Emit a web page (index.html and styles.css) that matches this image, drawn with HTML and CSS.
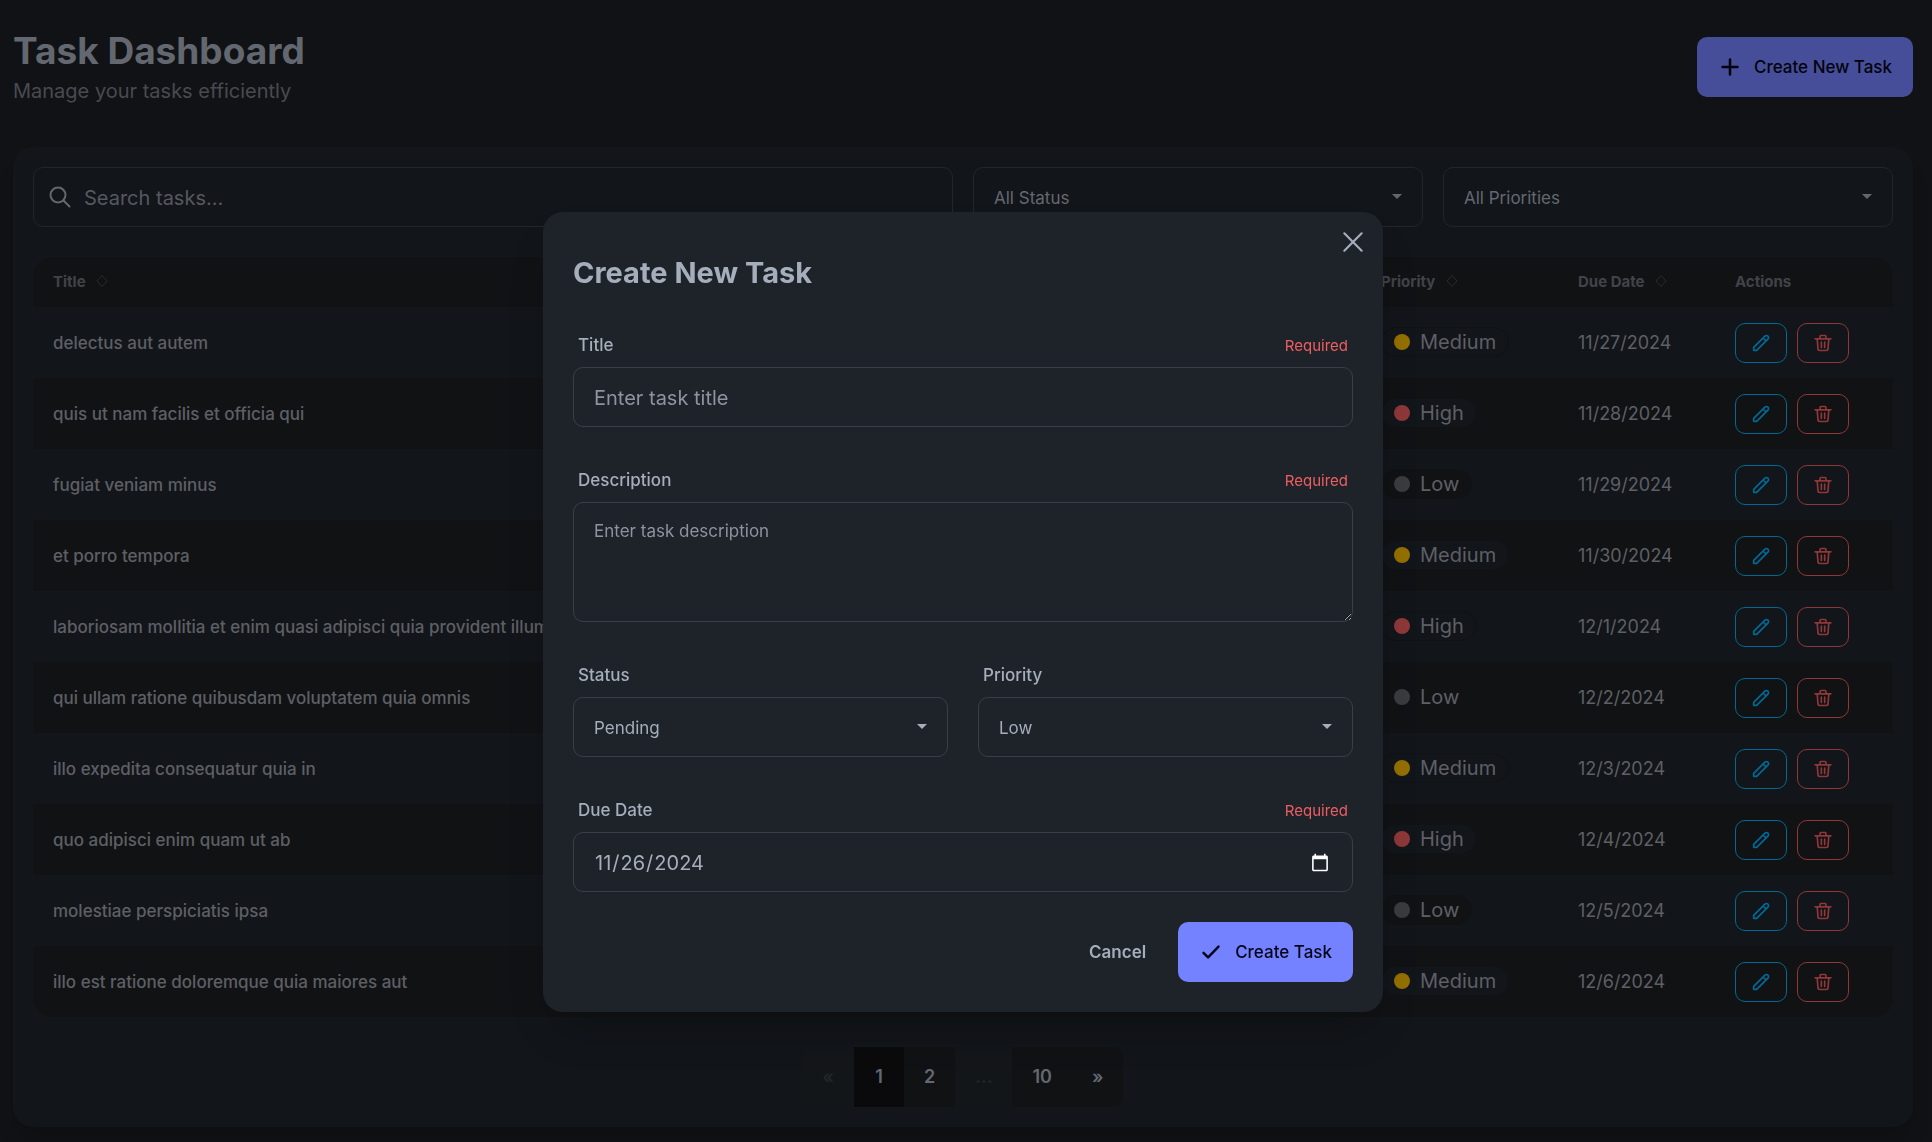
FILE: index.html
```html
<!DOCTYPE html>
<html lang="en">
<head>
<meta charset="utf-8">
<meta name="viewport" content="width=device-width, initial-scale=1">
<title>Task Dashboard</title>
<link rel="stylesheet" href="styles.css">
</head>
<body>
<svg class="sprite" aria-hidden="true">
  <symbol id="i-pencil" viewBox="0 0 24 24"><path d="M14.500 6l3.500 3.500M16.700 3.700a2.500 2.500 0 0 1 3.600 3.600L6.800 20.800H3.200v-3.600L16.700 3.700z"/></symbol>
  <symbol id="i-trash" viewBox="0 0 24 24"><path d="M2.500 7h19M5 7l1 12a2 2 0 0 0 2 2h8a2 2 0 0 0 2-2l1-12M8.500 7V4a1 1 0 0 1 1-1h5a1 1 0 0 1 1 1v3M10 11v6.500M14 11v6.500"/></symbol>
  <symbol id="i-plus" viewBox="0 0 24 24"><path d="M12 3v18M3 12h18"/></symbol>
  <symbol id="i-check" viewBox="0 0 24 24"><path d="M3 13l5.500 5.500L21 5.500"/></symbol>
  <symbol id="i-x" viewBox="0 0 24 24"><path d="M4 4l16 16M20 4L4 20"/></symbol>
  <symbol id="i-search" viewBox="0 0 24 24"><circle cx="10" cy="10" r="7.500"/><path d="M15.500 15.500l6 6"/></symbol>
  <symbol id="i-sort" viewBox="0 0 12 14"><path d="M6 1.500L11 7L6 12.500L1 7z"/></symbol>
  <symbol id="i-caret" viewBox="0 0 10 6"><path d="M0 0h10L5 5z"/></symbol>
</svg>

<div class="page">
  <header class="page-head">
    <div>
      <h1>Task Dashboard</h1>
      <p>Manage your tasks efficiently</p>
    </div>
    <button class="btn btn-primary" type="button"><svg class="icon"><use href="#i-plus"/></svg>Create New Task</button>
  </header>

  <main class="card">
    <div class="filters">
      <label class="field search">
        <svg class="icon"><use href="#i-search"/></svg>
        <input type="text" placeholder="Search tasks..." aria-label="Search tasks">
      </label>
      <div class="select"><select aria-label="Status filter"><option>All Status</option></select><svg class="caret"><use href="#i-caret"/></svg></div>
      <div class="select"><select aria-label="Priority filter"><option>All Priorities</option></select><svg class="caret"><use href="#i-caret"/></svg></div>
    </div>

    <table class="tasks">
      <colgroup><col><col class="c-priority"><col class="c-due"><col class="c-actions"></colgroup>
      <thead>
        <tr>
          <th>Title <svg class="sort"><use href="#i-sort"/></svg></th>
          <th>Priority <svg class="sort"><use href="#i-sort"/></svg></th>
          <th>Due Date <svg class="sort"><use href="#i-sort"/></svg></th>
          <th>Actions</th>
        </tr>
      </thead>
      <tbody id="rows"></tbody>
    </table>

    <nav class="pager" aria-label="Pages">
      <button type="button" disabled>«</button>
      <button type="button" class="current">1</button>
      <button type="button">2</button>
      <button type="button" disabled>...</button>
      <button type="button">10</button>
      <button type="button">»</button>
    </nav>
  </main>
</div>

<div class="backdrop">
  <form class="modal" role="dialog" aria-labelledby="modal-title">
    <button class="close" type="button" aria-label="Close"><svg class="icon"><use href="#i-x"/></svg></button>
    <h2 id="modal-title">Create New Task</h2>
    <div class="control">
      <div class="label"><label for="f-title">Title</label><span class="required">Required</span></div>
      <input class="field" id="f-title" type="text" placeholder="Enter task title">
    </div>
    <div class="control">
      <div class="label"><label for="f-desc">Description</label><span class="required">Required</span></div>
      <textarea class="field" id="f-desc" placeholder="Enter task description"></textarea>
    </div>
    <div class="pair">
      <div class="control">
        <div class="label"><label for="f-status">Status</label></div>
        <div class="select"><select id="f-status"><option>Pending</option></select><svg class="caret"><use href="#i-caret"/></svg></div>
      </div>
      <div class="control">
        <div class="label"><label for="f-priority">Priority</label></div>
        <div class="select"><select id="f-priority"><option>Low</option></select><svg class="caret"><use href="#i-caret"/></svg></div>
      </div>
    </div>
    <div class="control">
      <div class="label"><label for="f-due">Due Date</label><span class="required">Required</span></div>
      <input class="field" id="f-due" type="date" value="2024-11-26">
    </div>
    <div class="modal-actions">
      <button class="btn btn-ghost" type="button">Cancel</button>
      <button class="btn btn-primary" type="submit"><svg class="icon"><use href="#i-check"/></svg>Create Task</button>
    </div>
  </form>
</div>
<script src="tasks.js"></script>
</body>
</html>
```
FILE: styles.css
```css
*, *::before, *::after { box-sizing: border-box; }

:root {
  --base-100: #1e232a;
  --base-200: #1c1e22;
  --content: #a6adbb;
  --primary: #7582ff;
  --info: #00b0f8;
  --warning: #f8ba00;
  --error: #ee5d60;
  --line: #393f48;
  color-scheme: dark;
}

body {
  margin: 0;
  background: #1c1e23;
  color: var(--content);
  font: 400 20px/30px Inter, "Liberation Sans", sans-serif;
}

button, input, select, textarea { font: inherit; color: inherit; }
h1, h2, p { margin: 0; }

.sprite { position: absolute; width: 0; height: 0; }
svg { fill: none; stroke: currentColor; flex: none; }
.icon { width: 20px; height: 20px; stroke-width: 2; stroke-linecap: round; stroke-linejoin: round; }

.page { padding: 27px 19px 15px 13px; }

.page-head {
  display: flex;
  justify-content: space-between;
  align-items: center;
  margin-bottom: 40px;
}
.page-head h1 { font-size: 37px; line-height: 48px; font-weight: 700; }
.page-head p { line-height: 32px; color: #797c85; }

.btn {
  display: flex;
  align-items: center;
  gap: 14px;
  height: 60px;
  padding: 0 20px 0 22px;
  border: 1px solid transparent;
  border-radius: 10px;
  font-size: 17px;
  font-weight: 500;
}
.btn .icon { stroke-width: 3; }
.btn-primary { background: var(--primary); color: #050617; }
.btn-ghost { background: none; font-weight: 600; padding: 0 31px; }

.card {
  padding: 20px;
  border-radius: 20px;
  background: var(--base-100);
  box-shadow: 0 20px 25px -5px rgba(0, 0, 0, .1), 0 8px 10px -6px rgba(0, 0, 0, .1);
}

.filters {
  display: grid;
  grid-template-columns: repeat(4, 1fr);
  gap: 20px;
  margin-bottom: 30px;
}

.field, .select select {
  display: block;
  width: 100%;
  height: 60px;
  padding: 2px 20px 0;
  border: 1px solid var(--line);
  border-radius: 10px;
  background: none;
  outline: none;
}
.field::placeholder, .search input::placeholder { color: #8d939f; opacity: 1; }

.search { grid-column: span 2; display: flex; align-items: center; gap: 12px; padding: 0 14px; }
.search .icon { width: 24px; height: 24px; }
.search input { flex: 1; border: 0; background: none; outline: none; padding: 2px 0 0; }

.select { display: grid; align-items: center; }
.select select, .caret { grid-area: 1 / 1; }
.select select { appearance: none; font-size: 17px; }
.caret { justify-self: end; width: 10px; height: 6px; margin-right: 21px; fill: currentColor; stroke: none; pointer-events: none; }

.tasks {
  width: 100%;
  table-layout: fixed;
  border-collapse: separate;
  border-spacing: 0;
  border-radius: 20px;
  overflow: hidden;
  font-size: 18px;
  text-align: left;
}
.c-priority { width: 197px; }
.c-due { width: 157px; }
.c-actions { width: 178px; }
.tasks th { height: 50px; padding: 0 20px; font-size: 15px; line-height: 20px; color: #6c7078; background: var(--base-200); }
.tasks td { height: 71px; padding: 0 20px; white-space: nowrap; color: #9b9fa8; }
.tasks td:first-child { font-size: 17px; font-weight: 500; }
.tasks tbody tr:nth-child(even) { background: var(--base-200); }
.sort { width: 12px; height: 14px; margin-left: 7px; vertical-align: -1px; opacity: .5; }

.badge {
  display: inline-flex;
  align-items: center;
  gap: 10px;
  height: 30px;
  padding: 0 12px;
  border: 1px solid var(--base-200);
  border-radius: 15px;
  background: var(--base-100);
  font-size: 20px;
}
.badge i { width: 16px; height: 16px; border-radius: 50%; background: #62646a; }
.badge.medium i { background: var(--warning); }
.badge.high i { background: var(--error); }
.badge.low { background: var(--base-200); }

.row-actions { display: flex; gap: 10px; }
.row-actions button {
  display: flex;
  align-items: center;
  justify-content: center;
  width: 52px;
  height: 40px;
  padding: 0;
  border: 1px solid currentColor;
  border-radius: 10px;
  background: none;
}
.row-actions .edit { color: var(--info); }
.row-actions .delete { color: var(--error); }

.pager { display: flex; justify-content: center; margin-top: 30px; }
.pager button {
  height: 60px;
  padding: 0 20px;
  border: 0;
  background: var(--base-200);
  font-size: 18px;
  font-weight: 600;
  min-width: 50px;
}
.pager button:first-child { border-radius: 10px 0 0 10px; }
.pager button:last-child { border-radius: 0 10px 10px 0; }
.pager button:disabled { background: #20252b; color: #3a4048; }
.pager .current { background: #111214; }

.backdrop {
  position: fixed;
  inset: 0;
  display: grid;
  align-items: center;
  justify-items: center;
  padding: 82px 6px 0 0;
  background: rgba(0, 0, 0, .4);
}

.modal {
  position: relative;
  display: flex;
  flex-direction: column;
  gap: 30px;
  width: 840px;
  max-width: 92%;
  padding: 40px 30px 30px;
  border-radius: 20px;
  background: var(--base-100);
  box-shadow: 0 25px 50px -12px rgba(0, 0, 0, .25);
}
.modal h2 { padding-top: 2px; font-size: 29px; line-height: 38px; font-weight: 700; }
.close {
  position: absolute;
  top: 10px;
  right: 10px;
  display: flex;
  align-items: center;
  justify-content: center;
  width: 40px;
  height: 40px;
  padding: 0;
  border: 0;
  background: none;
}
.close .icon { width: 26px; height: 26px; stroke-width: 2; }

.label {
  display: flex;
  justify-content: space-between;
  padding: 11px 5px 9px;
  font-size: 17px;
  line-height: 25px;
  font-weight: 500;
}
.required { font-size: 15px; font-weight: 400; color: var(--error); }
textarea.field { height: 120px; padding: 10px 20px; font-size: 17px; line-height: 36px; resize: vertical; }
.pair { display: grid; grid-template-columns: 1fr 1fr; gap: 30px; }
.modal-actions { display: flex; justify-content: flex-end; }
```
FILE: tasks.js
```js
const tasks = [
  ["delectus aut autem", "Medium", "11/27/2024"],
  ["quis ut nam facilis et officia qui", "High", "11/28/2024"],
  ["fugiat veniam minus", "Low", "11/29/2024"],
  ["et porro tempora", "Medium", "11/30/2024"],
  ["laboriosam mollitia et enim quasi adipisci quia provident illum", "High", "12/1/2024"],
  ["qui ullam ratione quibusdam voluptatem quia omnis", "Low", "12/2/2024"],
  ["illo expedita consequatur quia in", "Medium", "12/3/2024"],
  ["quo adipisci enim quam ut ab", "High", "12/4/2024"],
  ["molestiae perspiciatis ipsa", "Low", "12/5/2024"],
  ["illo est ratione doloremque quia maiores aut", "Medium", "12/6/2024"],
];

document.getElementById("rows").innerHTML = tasks.map(([title, priority, due]) => `
  <tr>
    <td>${title}</td>
    <td><span class="badge ${priority.toLowerCase()}"><i></i>${priority}</span></td>
    <td>${due}</td>
    <td><div class="row-actions">
      <button class="edit" type="button" aria-label="Edit"><svg class="icon"><use href="#i-pencil"/></svg></button>
      <button class="delete" type="button" aria-label="Delete"><svg class="icon"><use href="#i-trash"/></svg></button>
    </div></td>
  </tr>`).join("");
```
